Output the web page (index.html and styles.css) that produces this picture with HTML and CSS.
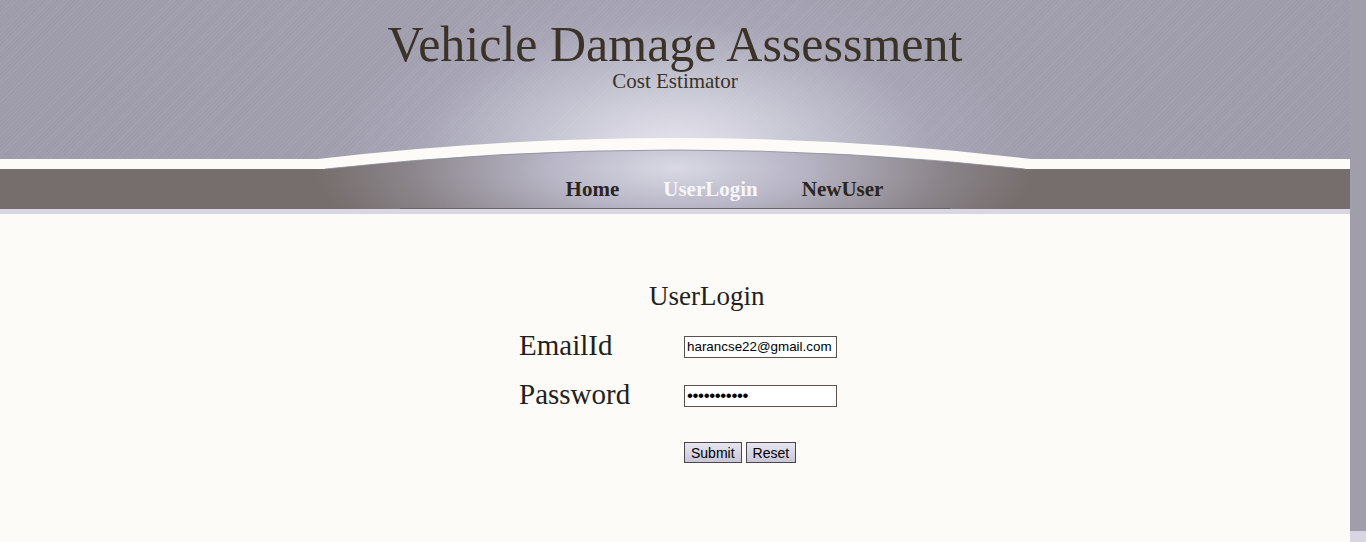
FILE: index.html
```html
<!DOCTYPE html>
<html>
<head>
<meta charset="utf-8">
<title>Vehicle Damage Assessment</title>
<link rel="stylesheet" href="styles.css">
</head>
<body>
<div class="frame">
  <div class="page">
    <div class="top">
      <header class="masthead">
        <h1 class="title">Vehicle Damage Assessment</h1>
        <p class="subtitle">Cost Estimator</p>
      </header>
      <div class="band"></div>
      <nav class="nav">
        <a class="nav-link" href="#">Home</a>
        <a class="nav-link active" href="#">UserLogin</a>
        <a class="nav-link" href="#">NewUser</a>
      </nav>
      <div class="strip"></div>
      <svg class="arc" width="1350" height="80" viewBox="0 130 1350 80" aria-hidden="true">
        <defs>
          <radialGradient id="navglow" gradientUnits="userSpaceOnUse" cx="675" cy="168" r="360" gradientTransform="translate(675 168) scale(1 0.32) translate(-675 -168)">
            <stop offset="0" stop-color="#d9d8e4"/>
            <stop offset="0.35" stop-color="#b8b6c6"/>
            <stop offset="0.75" stop-color="#8a8389"/>
            <stop offset="1" stop-color="#766e6c"/>
          </radialGradient>
        </defs>
        <path d="M318,159 Q675,117 1032,159 L1350,159 L1350,169 L0,169 L0,159 Z" fill="#fcfbf8"/>
        <path d="M0,169 L325,169 Q675,131 1025,169 L1350,169 L1350,209 L0,209 Z" fill="url(#navglow)"/>
        <path d="M325,169 Q675,131 1025,169" fill="none" stroke="#8d8a9a" stroke-width="0.8"/>
        <line x1="400" y1="208.5" x2="950" y2="208.5" stroke="#6a6366" stroke-width="1"/>
      </svg>
    </div>
    <main class="content">
      <form class="login">
        <h2 class="login-title">UserLogin</h2>
        <div class="row">
          <label class="label" for="email">EmailId</label>
          <input class="field" id="email" type="text" value="harancse22@gmail.com">
        </div>
        <div class="row">
          <label class="label" for="pwd">Password</label>
          <input class="field pass" id="pwd" type="password" value="abcdefghijk">
        </div>
        <div class="actions">
          <button class="btn" type="button">Submit</button>
          <button class="btn" type="button">Reset</button>
        </div>
      </form>
    </main>
  </div>
  <div class="scroll"><div class="scroll-end"></div></div>
</div>
</body>
</html>
```
FILE: styles.css
```css
html, body {
  margin: 0;
  padding: 0;
  height: 100%;
  overflow: hidden;
}
body {
  font-family: "Liberation Serif", "DejaVu Serif", serif;
  background: #fcfbf8;
}
.frame {
  display: flex;
  height: 542px;
}
.page {
  width: 1350px;
  flex: none;
  background: #fcfbf8;
}
.scroll {
  width: 16px;
  flex: none;
  background: #a09eab;
  display: flex;
  flex-direction: column;
  justify-content: flex-end;
}
.scroll-end {
  height: 11px;
  background: #d8d6e2;
}
.top {
  position: relative;
}
.masthead {
  height: 159px;
  box-sizing: border-box;
  padding-top: 20px;
  text-align: center;
  background:
    repeating-linear-gradient(135deg, rgba(255,255,255,0.05) 0 1px, rgba(255,255,255,0) 1px 3px),
    radial-gradient(ellipse 340px 170px at 675px 150px, #e6e5ee 0%, #c4c3d1 40%, #a7a5b5 75%, rgba(158,156,171,0) 100%),
    linear-gradient(90deg, #9d9baa 0%, #a3a1b0 50%, #9d9baa 100%);
}
.title {
  margin: 0;
  font-weight: normal;
  font-size: 50px;
  line-height: 48px;
  color: #3a3328;
}
.subtitle {
  margin: 2px 0 0;
  font-size: 21px;
  line-height: 22px;
  color: #3a3328;
}
.band {
  height: 10px;
  background: #fcfbf8;
}
.nav {
  position: relative;
  z-index: 2;
  height: 40px;
  display: flex;
  align-items: center;
  justify-content: center;
  gap: 44px;
  padding-left: 99px;
  box-sizing: border-box;
}
.nav-link {
  font-weight: bold;
  font-size: 21px;
  color: #2b2520;
  text-decoration: none;
}
.nav-link.active {
  color: #f6f5fa;
}
.strip {
  height: 5px;
  background: #d8d6e0;
}
.arc {
  position: absolute;
  left: 0;
  top: 130px;
  z-index: 1;
  display: block;
}
.content {
  padding-top: 66px;
}
.login {
  width: 318px;
  margin: 0 auto;
  padding-left: 6px;
  color: #231f1c;
}
.login-title {
  margin: 0 0 10px 130px;
  font-weight: normal;
  font-size: 27px;
  line-height: 32px;
}
.row {
  display: flex;
  align-items: center;
  height: 49px;
}
.label {
  width: 165px;
  flex: none;
  font-size: 29px;
  margin-top: -2px;
}
.field {
  width: 153px;
  height: 22px;
  box-sizing: border-box;
  border: 1px solid #5a524d;
  background: #fff;
  padding: 0 2px;
  font-family: "Liberation Sans", Arial, sans-serif;
  font-size: 13.4px;
  color: #000;
  margin: 0;
}
.field.pass {
  font-size: 17px;
  letter-spacing: -0.4px;
}
.actions {
  display: flex;
  gap: 4px;
  margin-top: 22px;
  padding-left: 165px;
}
.btn {
  height: 21px;
  box-sizing: border-box;
  padding: 0 6px;
  border: 1px solid #4a4548;
  background: linear-gradient(#e6e5ef, #c9c7d8);
  font-family: "Liberation Sans", Arial, sans-serif;
  font-size: 14px;
  color: #000;
  margin: 0;
}
```
